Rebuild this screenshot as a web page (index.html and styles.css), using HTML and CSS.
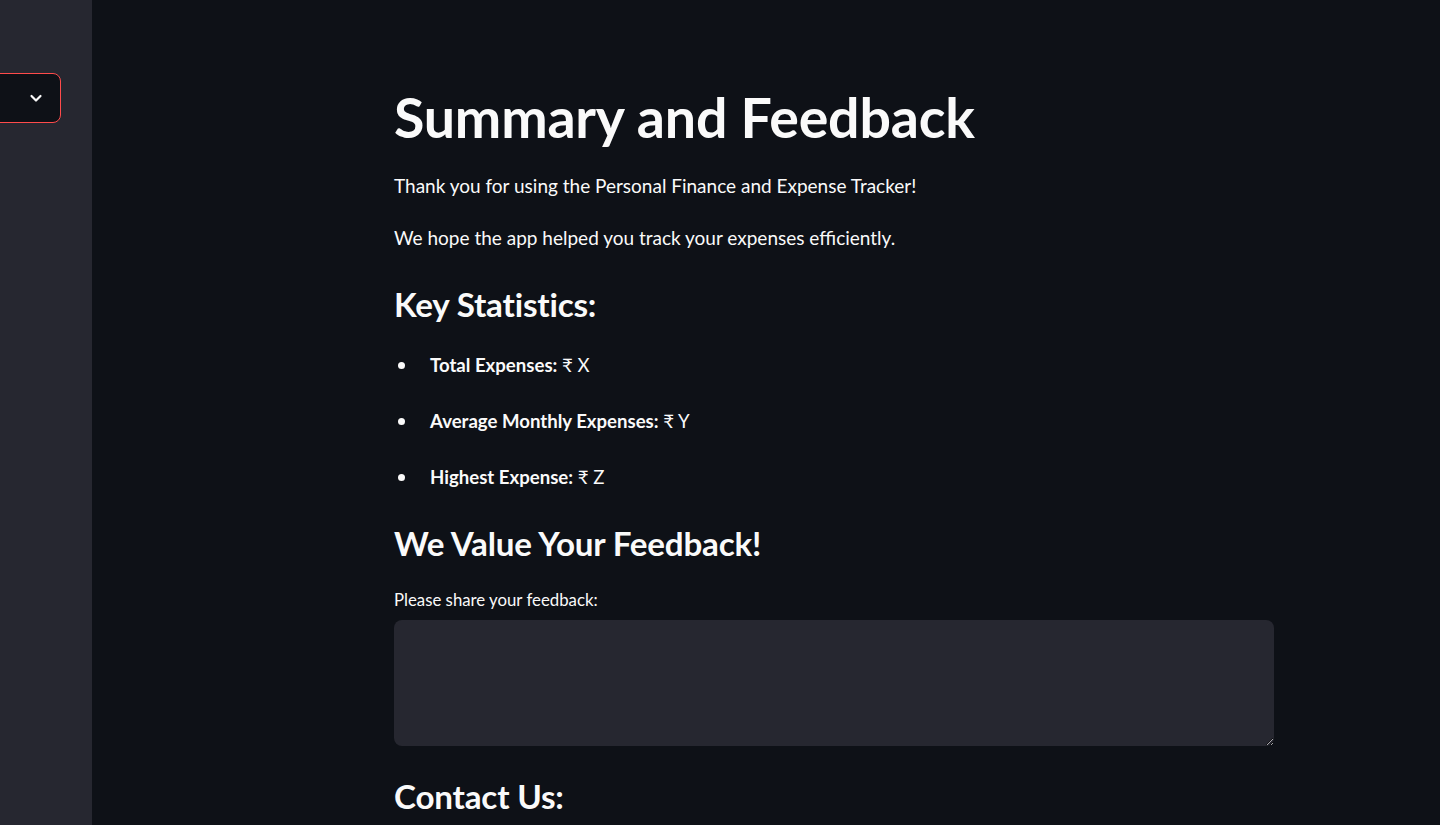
FILE: index.html
```html
<!DOCTYPE html>
<html lang="en">
<head>
<meta charset="utf-8">
<title>Summary and Feedback</title>
<link rel="stylesheet" href="styles.css">
</head>
<body>
<div class="app">
  <aside class="sidebar">
    <div class="select">
      <svg class="chev" width="14" height="14" viewBox="0 0 14 14"><path d="M2.5 5l4.5 4.5 4.5-4.5" fill="none" stroke="#fafafa" stroke-width="2.2" stroke-linecap="round" stroke-linejoin="round"/></svg>
    </div>
  </aside>
  <main class="main">
    <div class="content">
      <h1 class="title">Summary and Feedback</h1>
      <p class="text">Thank you for using the Personal Finance and Expense Tracker!</p>
      <p class="text">We hope the app helped you track your expenses efficiently.</p>
      <h3 class="sub sub-key">Key Statistics:</h3>
      <ul class="stats">
        <li><strong>Total Expenses:</strong>&nbsp;₹ X</li>
        <li><strong>Average Monthly Expenses:</strong>&nbsp;₹ Y</li>
        <li><strong>Highest Expense:</strong>&nbsp;₹ Z</li>
      </ul>
      <h3 class="sub sub-fb">We Value Your Feedback!</h3>
      <label class="label" for="fb">Please share your feedback:</label>
      <textarea id="fb" class="area"></textarea>
      <h3 class="sub sub-contact">Contact Us:</h3>
    </div>
  </main>
</div>
</body>
</html>
```
FILE: styles.css
```css
html, body {
  margin: 0;
  padding: 0;
  height: 100%;
  background: #0e1117;
  overflow: hidden;
}
body {
  font-family: "Lato", "Liberation Sans", sans-serif;
  color: #fafafa;
}
.app {
  display: flex;
  height: 825px;
}
.sidebar {
  width: 92px;
  flex: none;
  background: #262730;
  padding-top: 73px;
  box-sizing: border-box;
}
.select {
  width: 80px;
  height: 50px;
  margin-left: -19px;
  box-sizing: border-box;
  border: 1px solid #ff4b4b;
  border-radius: 8px;
  background: #0e1117;
  display: flex;
  align-items: center;
  justify-content: flex-end;
  padding-right: 17px;
}
.chev { display: block; }
.main {
  flex: 1;
  padding-left: 302px;
}
.content {
  width: 880px;
  padding-top: 84px;
}
.title {
  margin: 0;
  font-size: 55.5px;
  font-weight: 700;
  line-height: 66px;
  letter-spacing: -0.2px;
}
.text {
  margin: 20px 0 0;
  font-size: 19px;
  line-height: 32px;
}
.sub {
  margin: 30px 0 0;
  font-size: 33.2px;
  font-weight: 700;
  line-height: 44px;
  letter-spacing: -0.2px;
}
.sub-key { margin-top: 28px; }
.stats {
  margin: 23px 0 0;
  padding: 0;
  list-style: none;
  font-size: 18.6px;
  line-height: 32px;
}
.stats li {
  display: flex;
  align-items: center;
}
.stats li::before {
  content: "";
  flex: none;
  width: 7px;
  height: 7px;
  border-radius: 50%;
  background: #fafafa;
  margin-left: 4px;
  margin-right: 25px;
}
.stats li + li { margin-top: 24px; }
.stats strong { font-weight: 700; }
.sub-fb { margin-top: 28px; }
.label {
  display: block;
  margin-top: 23px;
  font-size: 16.8px;
  line-height: 24px;
}
.area {
  display: block;
  margin-top: 8px;
  width: 880px;
  height: 126px;
  box-sizing: border-box;
  background: #262730;
  border: none;
  border-radius: 8px;
  color: #fafafa;
  resize: vertical;
  outline: none;
}
.sub-contact { margin-top: 28px; }
```
